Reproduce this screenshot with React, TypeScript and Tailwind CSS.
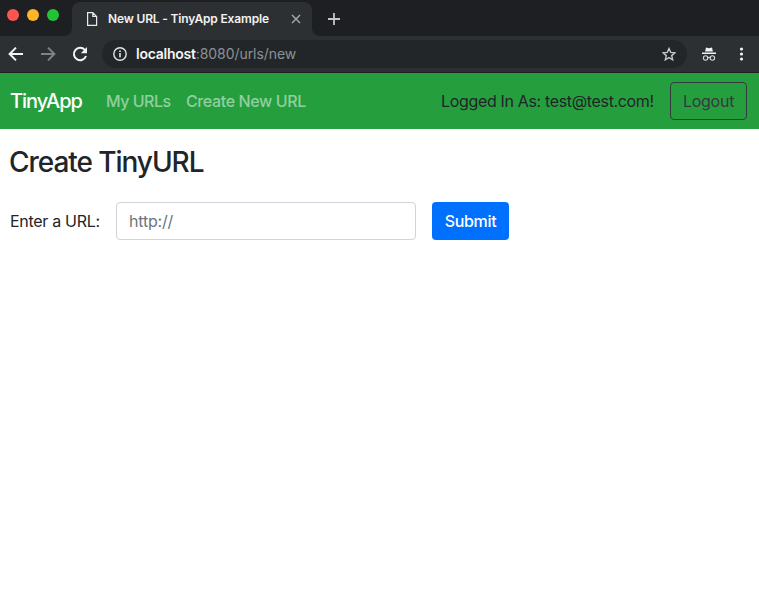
import React from "react";

function TabFlare({ flip = false }: { flip?: boolean }) {
  return (
    <svg width="8" height="8" viewBox="0 0 8 8" className={flip ? "-scale-x-100 self-end" : "self-end"}>
      <path d="M8 0v8H0a8 8 0 0 0 8-8z" fill="#2d3033" />
    </svg>
  );
}

function TabStrip() {
  return (
    <div className="flex h-9 items-stretch bg-[#1e1f23]">
      <div className="flex h-[30px] w-16 shrink-0 items-center gap-2 pl-[7px]">
        <span className="size-3 rounded-full bg-[#ff5550]" />
        <span className="size-3 rounded-full bg-[#fdb52a]" />
        <span className="size-3 rounded-full bg-[#22c337]" />
      </div>
      <TabFlare />
      <div className="mt-[2px] flex w-60 shrink-0 items-center rounded-t-lg bg-[#2d3033] pl-[14px]">
        <svg width="12" height="14" viewBox="0 0 12 14" fill="none" stroke="#e8e9ea" strokeWidth="1.2">
          <path d="M1.6.6h5.2l3.8 3.8v9H1.6zM6.8.6v3.8h3.8" />
        </svg>
        <span className="ml-[10px] w-[176px] whitespace-nowrap text-[12px] leading-4 font-semibold tracking-[-0.16px] text-[#f1f2f3]">
          New URL - TinyApp Example
        </span>
        <svg className="ml-[7px]" width="10" height="10" viewBox="0 0 10 10" stroke="#a9abad" strokeWidth="1.4">
          <path d="M1 1l8 8M9 1L1 9" />
        </svg>
      </div>
      <TabFlare flip />
      <svg className="mt-[13px] ml-2" width="12" height="12" viewBox="0 0 12 12" stroke="#c3c5c7" strokeWidth="1.8">
        <path d="M6 0v12M0 6h12" />
      </svg>
    </div>
  );
}

function Toolbar() {
  return (
    <div className="flex h-[37px] items-start border-b border-[#202124] bg-[#2d3033] pt-1">
      <div className="flex h-7 w-[102px] shrink-0 items-center pl-2">
        <svg width="16" height="16" viewBox="0 0 16 16" fill="none" stroke="#f3f4f4" strokeWidth="2">
          <path d="M15 8H2.5M8 1.6L1.6 8 8 14.4" />
        </svg>
        <svg className="ml-4" width="16" height="16" viewBox="0 0 16 16" fill="none" stroke="#7f8183" strokeWidth="2">
          <path d="M1 8h12.5M8 1.6L14.4 8 8 14.4" />
        </svg>
        <svg className="ml-4" width="16" height="16" viewBox="0 0 16 16">
          <path d="M12.8 3.9A6.2 6.2 0 1 0 14 10" fill="none" stroke="#f3f4f4" strokeWidth="2" />
          <path d="M15 1v6.2H8.8z" fill="#f3f4f4" />
        </svg>
      </div>
      <div className="flex h-7 w-[585px] shrink-0 items-center rounded-full bg-[#232629] pr-[11px] pl-[11px]">
        <svg width="14" height="14" viewBox="0 0 14 14" fill="none" stroke="#e2e4e5" strokeWidth="1.4">
          <circle cx="7" cy="7" r="6.2" />
          <path d="M7 6.1v4.2M7 3.5v1.6" strokeWidth="1.6" />
        </svg>
        <span className="ml-[9px] grow whitespace-nowrap text-[14px] leading-5 text-[#8c9196]">
          <span className="font-semibold tracking-[-0.25px] text-[#f4f5f5]">localhost</span>
          <span className="tracking-[-0.05px]">:8080/urls/new</span>
        </span>
        <svg width="14" height="14" viewBox="0 0 14 14" fill="none" stroke="#c4c6c8" strokeWidth="1.4" strokeLinejoin="miter">
          <path d="M7 1.5l1.7 3.9 4.2.4-3.2 2.8 1 4.2L7 10.6l-3.7 2.2 1-4.2L1.1 5.8l4.2-.4z" />
        </svg>
      </div>
      <div className="flex h-7 items-center pl-[15px]">
        <svg width="14" height="14" viewBox="0 0 14 14">
          <path d="M4 .6l3 .7 3-.7.9 3.9H3.1zM0 5.6h14v1.5H0z" fill="#f1f2f2" />
          <g fill="none" stroke="#d7d8d9" strokeWidth="1.1">
            <circle cx="3.6" cy="11" r="2.2" />
            <circle cx="10.4" cy="11" r="2.2" />
            <path d="M5.8 10.8q1.2-.8 2.4 0" />
          </g>
        </svg>
        <svg className="ml-[23px]" width="5" height="14" viewBox="0 0 5 14" fill="#f1f2f2">
          <circle cx="2.5" cy="2" r="1.6" />
          <circle cx="2.5" cy="7" r="1.6" />
          <circle cx="2.5" cy="12" r="1.6" />
        </svg>
      </div>
    </div>
  );
}

function Navbar() {
  return (
    <nav className="flex h-14 items-center bg-[#259f3e] pr-3 pl-[10px] whitespace-nowrap">
      <a className="w-24 text-[20px] leading-[30px] font-medium tracking-[-1px] text-white">TinyApp</a>
      <a className="w-20 font-medium tracking-[-0.5px] text-[#92cf9e]">My URLs</a>
      <a className="font-medium tracking-[-0.38px] text-[#92cf9e]">Create New URL</a>
      <span className="ml-auto w-[229px] tracking-[-0.34px] text-[#212529]">Logged In As: test@test.com!</span>
      <button className="h-[38px] w-[77px] rounded border border-[#343a40] tracking-[-0.25px] text-[#343a40]">Logout</button>
    </nav>
  );
}

export default function App() {
  return (
    <div className="h-[597px] w-[759px] overflow-hidden bg-white font-['Inter',sans-serif] text-[16px] leading-6 text-[#212529]">
      <TabStrip />
      <Toolbar />
      <Navbar />
      <main className="px-[10px] pt-4">
        <h3 className="-ml-px text-[28px] leading-[34px] font-medium tracking-[-1.05px]">Create TinyURL</h3>
        <form className="mt-[23px] flex items-center whitespace-nowrap">
          <label className="w-[106px] tracking-[-0.3px]">Enter a URL:</label>
          <input
            className="h-[38px] w-[300px] rounded border border-[#ced4da] px-3 tracking-[-0.2px] placeholder:text-[#6c757d]"
            placeholder="http://"
          />
          <button type="button" className="ml-4 h-[38px] w-[77px] rounded bg-[#0070ff] font-medium tracking-[-0.3px] text-white">
            Submit
          </button>
        </form>
      </main>
    </div>
  );
}
